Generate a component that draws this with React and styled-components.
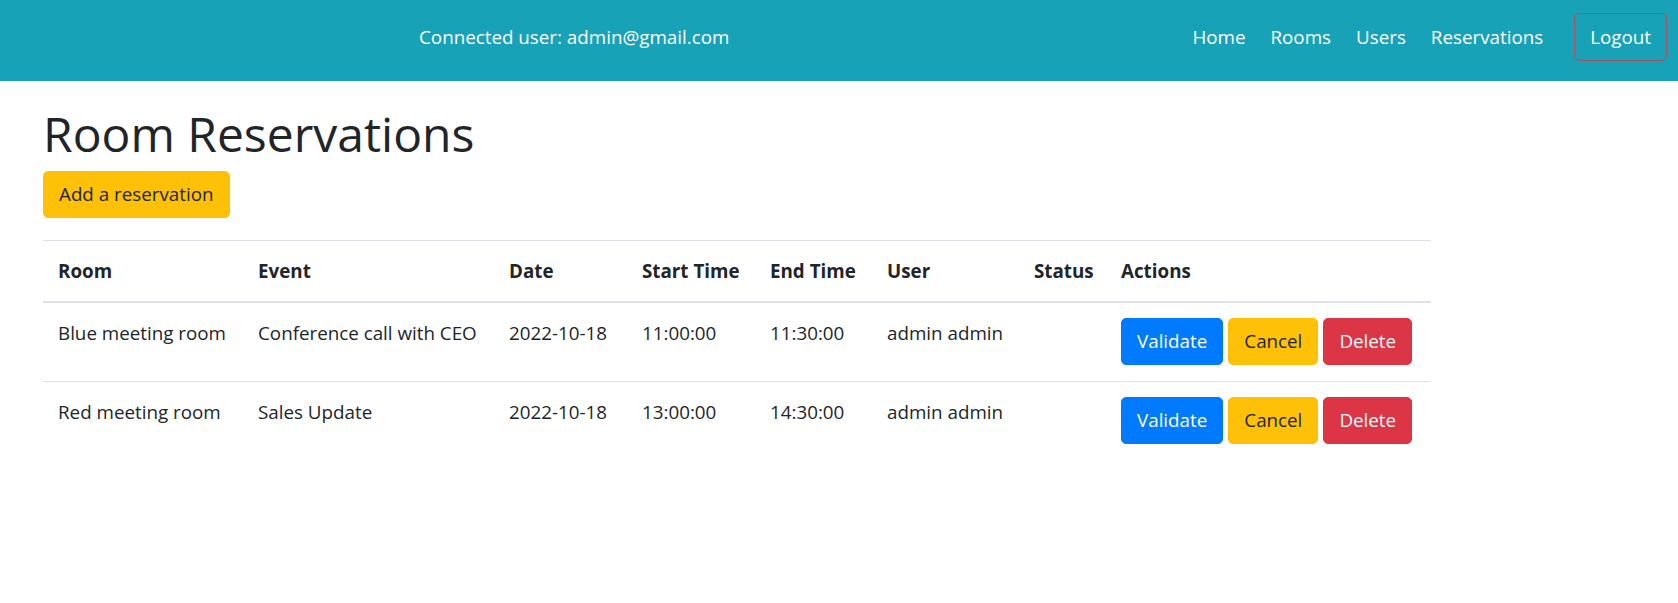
import styled, { createGlobalStyle } from 'styled-components';

const GlobalStyle = createGlobalStyle`
  html, body {
    margin: 0;
    padding: 0;
    background: #fff;
  }
  body {
    font-family: 'Open Sans', 'Noto Sans', sans-serif;
    font-size: 18.8px;
    line-height: 30px;
    color: #212529;
  }
  * {
    box-sizing: border-box;
  }
`;

const reservations = [
  {
    room: 'Blue meeting room',
    event: 'Conference call with CEO',
    date: '2022-10-18',
    start: '11:00:00',
    end: '11:30:00',
    user: 'admin admin',
    status: '',
  },
  {
    room: 'Red meeting room',
    event: 'Sales Update',
    date: '2022-10-18',
    start: '13:00:00',
    end: '14:30:00',
    user: 'admin admin',
    status: '',
  },
];

const columns = [
  { label: 'Room', width: 200 },
  { label: 'Event', width: 251 },
  { label: 'Date', width: 133 },
  { label: 'Start Time', width: 128 },
  { label: 'End Time', width: 117 },
  { label: 'User', width: 147 },
  { label: 'Status', width: 87 },
  { label: 'Actions', width: 325 },
];

const App = () => {
  return (
    <>
      <GlobalStyle />
      <Navbar>
        <Brand>Connected user: admin@gmail.com</Brand>
        <Menu>
          <NavLink>Home</NavLink>
          <NavLink>Rooms</NavLink>
          <NavLink>Users</NavLink>
          <NavLink>Reservations</NavLink>
          <LogoutButton>Logout</LogoutButton>
        </Menu>
      </Navbar>
      <Main>
        <Title>Room Reservations</Title>
        <Button $variant="warning">Add a reservation</Button>
        <Table>
          <colgroup>
            {columns.map((col) => (
              <col key={col.label} style={{ width: col.width }} />
            ))}
          </colgroup>
          <thead>
            <tr>
              {columns.map((col) => (
                <Th key={col.label}>{col.label}</Th>
              ))}
            </tr>
          </thead>
          <tbody>
            {reservations.map((r, index) => (
              <tr key={index}>
                <Td>{r.room}</Td>
                <Td>{r.event}</Td>
                <Td>{r.date}</Td>
                <Td>{r.start}</Td>
                <Td>{r.end}</Td>
                <Td>{r.user}</Td>
                <Td>{r.status}</Td>
                <Td>
                  <Actions>
                    <Button $variant="primary">Validate</Button>
                    <Button $variant="warning">Cancel</Button>
                    <Button $variant="danger">Delete</Button>
                  </Actions>
                </Td>
              </tr>
            ))}
          </tbody>
        </Table>
      </Main>
    </>
  );
};
export default App;

const Navbar = styled.nav`
  display: flex;
  align-items: center;
  height: 81px;
  padding: 0 11px 7px 0;
  background: #17a2b8;
  color: #fff;
`;

const Brand = styled.span`
  margin-left: 419px;
`;

const Menu = styled.div`
  display: flex;
  align-items: center;
  gap: 25px;
  margin-left: auto;
`;

const NavLink = styled.a`
  color: #fff;
  text-decoration: none;
  cursor: pointer;
`;

const LogoutButton = styled.button`
  margin-left: 6px;
  height: 48px;
  padding: 8px 15px;
  font: inherit;
  color: #fff;
  background: transparent;
  border: 1px solid rgb(166, 82, 100);
  border-radius: 5px;
  cursor: pointer;
`;

const Main = styled.main`
  padding: 23px 43px 0;
`;

const Title = styled.h1`
  margin: 0 0 7px;
  font-size: 48px;
  line-height: 60px;
  font-weight: 500;
  color: #212529;
`;

const palette = {
  primary: { bg: '#007bff', fg: '#fff' },
  warning: { bg: '#ffc107', fg: '#212529' },
  danger: { bg: '#dc3545', fg: '#fff' },
};

const Button = styled.button`
  display: inline-block;
  height: 47px;
  padding: 7px 15px 8px;
  font: inherit;
  line-height: 30px;
  color: ${(p) => palette[p.$variant].fg};
  background: ${(p) => palette[p.$variant].bg};
  border: 1px solid ${(p) => palette[p.$variant].bg};
  border-radius: 5px;
  cursor: pointer;
`;

const Table = styled.table`
  width: 1388px;
  margin-top: 22px;
  border-collapse: collapse;
  table-layout: fixed;
  color: #212529;
`;

const Th = styled.th`
  padding: 15px;
  text-align: left;
  vertical-align: bottom;
  font-weight: 700;
  border-top: 1px solid #dee2e6;
  border-bottom: 2px solid #dee2e6;
  white-space: nowrap;
`;

const Td = styled.td`
  padding: 15px;
  vertical-align: top;
  border-top: 1px solid #dee2e6;
  white-space: nowrap;
`;

const Actions = styled.div`
  display: flex;
  gap: 5px;
  height: 48px;
  align-items: flex-start;
`;
